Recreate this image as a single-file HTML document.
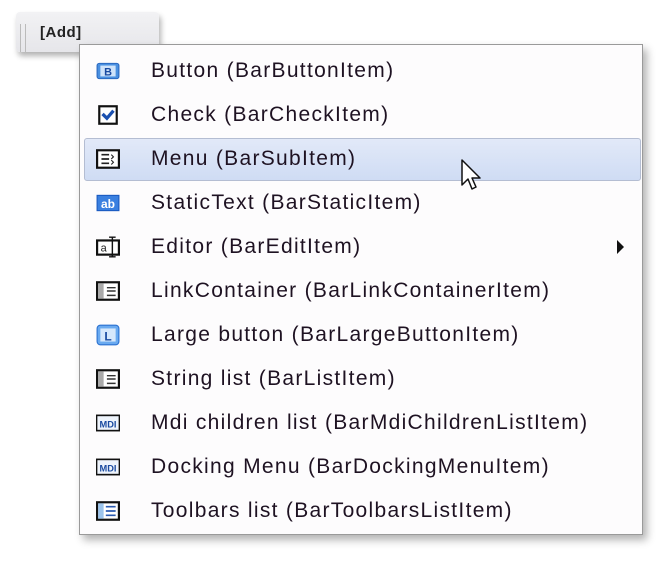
<!DOCTYPE html>
<html><head><style>
body{margin:0;width:670px;height:564px;background:#fff;position:relative;overflow:hidden;font-family:"Liberation Sans",sans-serif}
.bar{position:absolute;left:16px;top:12px;width:143px;height:40px;background:linear-gradient(#f2f2f4,#e6e6ea);border-radius:4px;box-shadow:2px 4px 6px rgba(0,0,0,.3)}
.grip{position:absolute;left:4px;top:12px;width:1px;height:28px;border-left:1px solid #bbb;border-right:1px solid #bbb;padding-right:3px}
.add{position:absolute;left:24px;top:12px;font-size:15px;font-weight:bold;color:#222;letter-spacing:.5px}
.menu{position:absolute;left:79px;top:44px;width:562px;height:489px;background:#fdfcfd;border:1px solid #9a9a9a;box-shadow:4px 5px 8px rgba(0,0,0,.3)}
.row{position:absolute;left:0;width:562px;height:44px}
.row span{position:absolute;left:71px;top:10px;font-size:21px;letter-spacing:1.3px;color:#1e1222;white-space:nowrap}
.ic{position:absolute;left:16px;top:11px;width:24px;height:22px}
.hl{position:absolute;left:4px;top:93px;width:555px;height:41px;background:linear-gradient(#e2e9f8,#cfdcf4);border:1px solid #b4bdd2;border-radius:3px}
</style></head><body>
<div class="bar"><div class="grip"></div><div class="add">[Add]</div></div>
<div class="menu">
<div class="hl"></div>
<div class="row" style="top:4px"><svg class="ic" viewBox="0 0 22 20"><rect x="1" y="3" width="20" height="14" rx="2" fill="#4a90e0" stroke="#2a68c0"/><rect x="4" y="5" width="14" height="10" fill="#cfe3fa"/><text x="11" y="14" font-size="10" font-weight="bold" text-anchor="middle" fill="#1a4aa0" font-family="Liberation Sans">B</text></svg><span>Button (BarButtonItem)</span></div>
<div class="row" style="top:48px"><svg class="ic" viewBox="0 0 22 20"><rect x="3" y="2" width="16" height="16" fill="#fff" stroke="#111" stroke-width="2"/><path d="M6 9l4 4 6-7" stroke="#1a50b0" stroke-width="3" fill="none"/></svg><span>Check (BarCheckItem)</span></div>
<div class="row" style="top:92px"><svg class="ic" viewBox="0 0 22 20"><rect x="1" y="2" width="20" height="16" fill="#fff" stroke="#111" stroke-width="2"/><path d="M5 6h7M5 10h7M5 14h7" stroke="#222" stroke-width="1.5"/><path d="M14 6l2 2-2 2M14 11l2 2-2 2" stroke="#222" fill="none"/></svg><span>Menu (BarSubItem)</span></div>
<div class="row" style="top:136px"><svg class="ic" viewBox="0 0 22 20"><rect x="1" y="3" width="20" height="14" fill="#3a80e0" stroke="#1a5ac0"/><text x="11" y="14.5" font-size="11" font-weight="bold" text-anchor="middle" fill="#fff" font-family="Liberation Sans">ab</text></svg><span>StaticText (BarStaticItem)</span></div>
<div class="row" style="top:180px"><svg class="ic" viewBox="0 0 22 20"><rect x="1" y="4" width="20" height="13" fill="#fff" stroke="#111" stroke-width="2"/><text x="7" y="14" font-size="10" text-anchor="middle" fill="#222" font-family="Liberation Sans">a</text><path d="M15 1v18M12 1h6M12 19h6" stroke="#111" stroke-width="1.3"/></svg><span>Editor (BarEditItem)</span></div>
<div class="row" style="top:224px"><svg class="ic" viewBox="0 0 22 20"><rect x="1" y="2" width="20" height="16" fill="#fff" stroke="#111" stroke-width="2"/><rect x="2" y="3" width="5" height="14" fill="#aaa"/><path d="M10 7h8M10 10h8M10 14h8" stroke="#333" stroke-width="1.3"/></svg><span>LinkContainer (BarLinkContainerItem)</span></div>
<div class="row" style="top:268px"><svg class="ic" viewBox="0 0 22 20"><rect x="1" y="1" width="20" height="18" rx="3" fill="#6aaaf0" stroke="#2a70d0"/><rect x="4" y="4" width="14" height="12" fill="#d6e8fc"/><text x="11" y="15" font-size="11" font-weight="bold" text-anchor="middle" fill="#1a4aa0" font-family="Liberation Sans">L</text></svg><span>Large button (BarLargeButtonItem)</span></div>
<div class="row" style="top:312px"><svg class="ic" viewBox="0 0 22 20"><rect x="1" y="2" width="20" height="16" fill="#fff" stroke="#111" stroke-width="2"/><rect x="2" y="3" width="5" height="14" fill="#aaa"/><path d="M10 7h8M10 10h8M10 14h8" stroke="#333" stroke-width="1.3"/></svg><span>String list (BarListItem)</span></div>
<div class="row" style="top:356px"><svg class="ic" viewBox="0 0 22 20"><rect x="0.5" y="3" width="21" height="14" fill="#eef4fc" stroke="#111" stroke-width="1.5"/><text x="11" y="14" font-size="8.5" font-weight="bold" text-anchor="middle" fill="#1a4aa0" font-family="Liberation Sans">MDI</text></svg><span>Mdi children list (BarMdiChildrenListItem)</span></div>
<div class="row" style="top:400px"><svg class="ic" viewBox="0 0 22 20"><rect x="0.5" y="3" width="21" height="14" fill="#eef4fc" stroke="#111" stroke-width="1.5"/><text x="11" y="14" font-size="8.5" font-weight="bold" text-anchor="middle" fill="#1a4aa0" font-family="Liberation Sans">MDI</text></svg><span>Docking Menu (BarDockingMenuItem)</span></div>
<div class="row" style="top:444px"><svg class="ic" viewBox="0 0 22 20"><rect x="1" y="2" width="20" height="16" fill="#fff" stroke="#111" stroke-width="2"/><rect x="2" y="3" width="5" height="14" fill="#9cc4ec"/><path d="M9 6h9M9 10h9M9 14h9" stroke="#2a5ab0" stroke-width="1.5"/></svg><span>Toolbars list (BarToolbarsListItem)</span></div>
<svg style="position:absolute;left:536px;top:195px" width="10" height="14"><path d="M1 0L8 7L1 14Z" fill="#111"/></svg>
</div>
<svg style="position:absolute;left:461px;top:159px" width="26" height="40"><path d="M1 1L1 26L7 20L11 30L15 28L11 19L19 19Z" fill="#fff" stroke="#111" stroke-width="1.5" stroke-linejoin="round"/></svg>
</body></html>
